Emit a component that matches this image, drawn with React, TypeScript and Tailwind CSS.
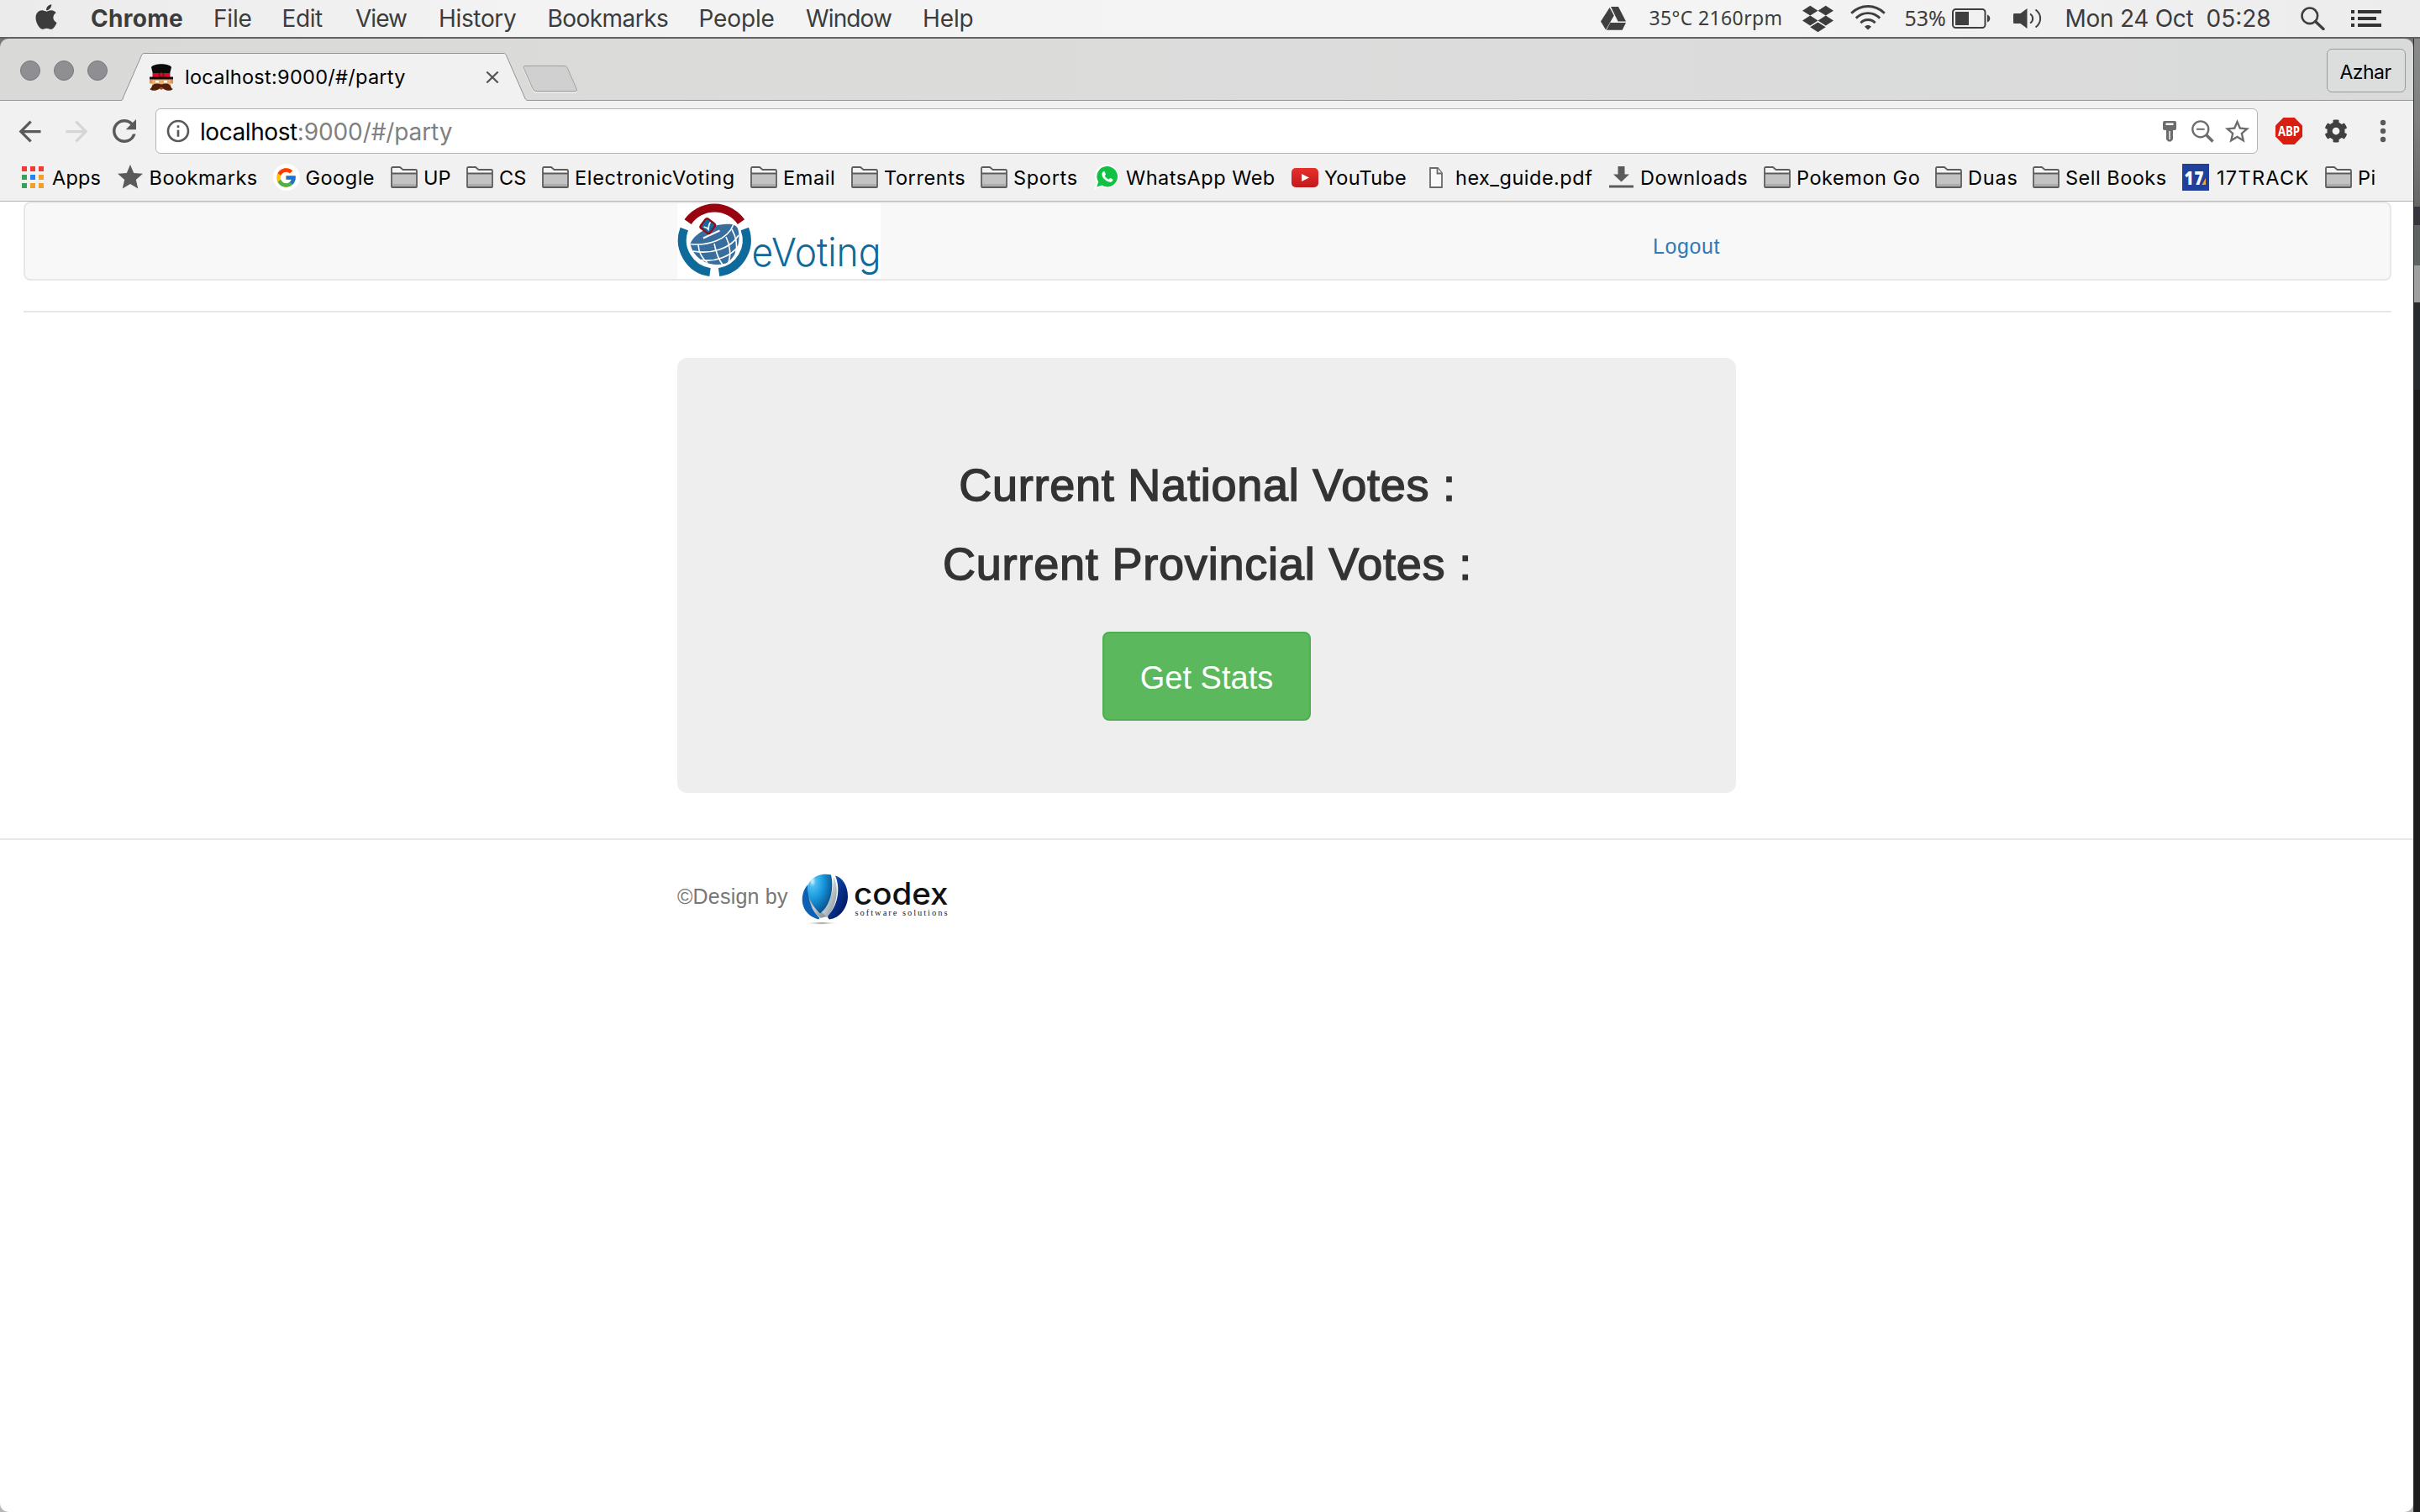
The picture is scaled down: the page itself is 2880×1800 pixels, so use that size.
import type { ReactNode } from "react";
import { FaApple, FaCog, FaDropbox } from "react-icons/fa";
import { FcGoogle } from "react-icons/fc";
import { MdArrowBack, MdArrowForward, MdInfoOutline, MdRefresh, MdStar, MdStarBorder } from "react-icons/md";

/* ---------- menu bar ---------- */

const menus = [
  { label: "Chrome", cls: "w-[146px] font-bold tracking-[0.28px]" },
  { label: "File", cls: "w-[81.5px] tracking-[-0.2px]" },
  { label: "Edit", cls: "w-[87.5px] tracking-[-0.42px]" },
  { label: "View", cls: "w-[99px] tracking-[-0.97px]" },
  { label: "History", cls: "w-[129.5px] tracking-[-0.34px]" },
  { label: "Bookmarks", cls: "w-[180px] tracking-[-0.55px]" },
  { label: "People", cls: "w-[127.5px] tracking-[-0.15px]" },
  { label: "Window", cls: "w-[139px] tracking-[-0.87px]" },
  { label: "Help", cls: "w-[64px] tracking-[-0.1px]" },
];

function DriveIcon() {
  return (
    <svg width="30" height="28" viewBox="0 0 30 28" fill="#3f3f3f">
      <path d="M10.6 1 15.8 10.4 6 27.6 0 17.4Z" />
      <path d="M12 0H21L30 17.4H20.6Z" />
      <path d="M11.3 18.9H30L25.6 27.8H6.9Z" />
    </svg>
  );
}

function WifiIcon() {
  return (
    <svg width="42" height="30" viewBox="0 0 42 30" fill="none" stroke="#3f3f3f" strokeWidth="2.9">
      <path d="M1.2 9.8C12.5-1.2 29.5-1.2 40.8 9.8" />
      <path d="M6.8 15.6C14.8 7.6 27.2 7.6 35.2 15.6" />
      <path d="M12.4 21.2C17.2 16.3 24.8 16.3 29.6 21.2" />
      <path d="M17 25.800C19.3 23.500 22.7 23.5 25 25.8L21 29.600Z" fill="#3f3f3f" stroke="none" />
    </svg>
  );
}

function BatteryIcon() {
  return (
    <svg width="46" height="24" viewBox="0 0 46 24">
      <rect x="1" y="1" width="38.500" height="22" rx="3.500" fill="none" stroke="#3f3f3f" strokeWidth="2" />
      <rect x="4" y="4" width="16" height="16" fill="#3f3f3f" />
      <path d="M42 7.500C46.4 8.500 46.400 15.5 42 16.5Z" fill="#3f3f3f" />
    </svg>
  );
}

function SpeakerIcon() {
  return (
    <svg width="34" height="24" viewBox="0 0 34 24" fill="none" stroke="#3f3f3f" strokeWidth="2">
      <path d="M0 7.500C0 6.500.5 6 1.500 6H8.500L16.500 0V24L8.500 18H1.500C.5 18 0 17.500 0 16.500Z" fill="#3f3f3f" stroke="none" />
      <path d="M20 6.500C24.2 9 24.2 15 20 17.500" />
      <path d="M26.500 1.500C34 7 34 17 26.500 22.500" />
    </svg>
  );
}

function MenuBar() {
  return (
    <header className="flex h-11 w-full items-center bg-[linear-gradient(90deg,#ebebeb_0%,#f3f3f3_22%,#f4f4f4_70%,#ececec_100%)] font-['Inter',sans-serif] text-[28px] leading-[44px] text-[#3c3c3c]">
      <div className="w-[108px] shrink-0 pl-[38px]">
        <FaApple size={34} className="-mt-1" />
      </div>
      {menus.map((m) => (
        <div key={m.label} className={"shrink-0 whitespace-nowrap " + m.cls}>{m.label}</div>
      ))}
      <div className="ml-auto flex h-11 shrink-0 items-center">
        <div className="w-[58px]"><DriveIcon /></div>
        <div className="-mt-0.5 w-[184.5px] whitespace-nowrap font-['Noto_Sans',sans-serif] text-[23px] tracking-[0.37px]">35°C 2160rpm</div>
        <div className="w-[55px]"><FaDropbox size={37} className="-ml-0.5" /></div>
        <div className="-mt-0.5 w-[64.5px]"><WifiIcon /></div>
        <div className="-mt-0.5 w-[56px] whitespace-nowrap font-['Noto_Sans',sans-serif] text-[25px]">53%</div>
        <div className="w-[73px]"><BatteryIcon /></div>
        <div className="w-[62px]"><SpeakerIcon /></div>
        <div className="w-[168px] whitespace-nowrap tracking-[-0.28px]">Mon 24 Oct</div>
        <div className="w-[112.500px] whitespace-nowrap">05:28</div>
        <div className="w-[60px]">
          <svg width="29" height="28" viewBox="0 0 29 28" fill="none" stroke="#3f3f3f">
            <circle cx="10.800" cy="10.800" r="9.300" strokeWidth="2.600" />
            <path d="M17.500 17.500 27 26.500" strokeWidth="3.400" strokeLinecap="round" />
          </svg>
        </div>
        <div className="w-[82px]">
          <svg width="37" height="20" viewBox="0 0 37 20" fill="#333">
            <path d="M0 0H4V4H0ZM8 0H36V4H8ZM0 8H4V12H0ZM8 8H30V12H8ZM0 16H4V20H0ZM8 16H36V20H8Z" />
          </svg>
        </div>
      </div>
    </header>
  );
}

/* ---------- tab strip ---------- */

function Favicon() {
  return (
    <svg width="28" height="32" viewBox="0 0 28 32">
      <path d="M3 18H25V27Q14 34 3 27Z" fill="#e9b06c" />
      <rect x="0" y="18.500" width="3" height="5" fill="#d9925a" />
      <rect x="25" y="18.500" width="3" height="5" fill="#d9925a" />
      <rect x="7" y="20" width="4" height="2.500" fill="#fff" />
      <rect x="17" y="20" width="4" height="2.500" fill="#fff" />
      <path d="M2 4C5-1 23-1 26 4L24 12H4Z" fill="#0a0a0a" />
      <path d="M3.500 11H24.500V16H3.500Z" fill="#d6062e" />
      <circle cx="14" cy="13" r="2.600" fill="#d6062e" stroke="#420" strokeWidth="1" />
      <path d="M0 15.500H28V18.500H0Z" fill="#1b0a0a" />
      <path d="M14 24.500C8 22 3 24 2.500 27.500C2 29 1 30 0 29.500C2 33 9 32.500 13 28.500H15C19 32.500 26 33 28 29.500C27 30 26 29 25.500 27.500C25 24 20 22 14 24.500Z" fill="#54200c" />
      <path d="M12 29H16L14 31Z" fill="#d6062e" />
    </svg>
  );
}

function TabStrip() {
  return (
    <div className="flex h-[74px] items-end rounded-t-[10px] border-b border-[#979797] bg-[linear-gradient(90deg,#d9d9d7_0%,#dbdbd9_30%,#dcdcdc_60%,#d9dada_100%)] font-['Inter',sans-serif]">
      <div className="flex w-36 shrink-0 gap-4 self-start pt-[26px] pl-6">
        <i className="h-6 w-6 rounded-full border border-[#77777b] bg-[#8f8f93]" />
        <i className="h-6 w-6 rounded-full border border-[#77777b] bg-[#8f8f93]" />
        <i className="h-6 w-6 rounded-full border border-[#77777b] bg-[#8f8f93]" />
      </div>
      <div className="relative -mb-px flex h-[57px] w-[484px] shrink-0 items-center pl-[34px]">
        <svg className="absolute top-0 left-0" width="484" height="57" viewBox="0 0 484 57">
          <path d="M0 56.500C2 56.500 2 55 3 52L24 4C25 1.500 25.500.5 28 .5H455C457.500.5 458 1.500 459 4L480 52C481 55 482 56.500 484 56.500V57H0Z" fill="#f1f1f1" />
          <path d="M0 56.500C2 56.500 2 55 3 52L24 4C25 1.500 25.500.5 28 .5H455C457.500.5 458 1.500 459 4L480 52C481 55 482 56.500 484 56.500" fill="none" stroke="#929292" />
        </svg>
        <span className="relative w-[42px]"><Favicon /></span>
        <span className="relative w-[358px] whitespace-nowrap text-[23.5px] leading-8 tracking-[0.29px] text-black">localhost:9000/#/party</span>
        <svg className="relative" width="16" height="14" viewBox="0 0 15 14" stroke="#555" strokeWidth="2.200"><path d="M.8.5 14.200 13.500M14.200.5.8 13.500" /></svg>
      </div>
      <svg className="-ml-1.5 mb-2 shrink-0" width="66" height="33" viewBox="0 0 66 33">
        <path d="M3 2.500H48C51 2.500 52.500 3 53.500 5.500L64 28.500C65 31 64.500 32.500 62 32.500H17C14.500 32.500 13 31.500 12 29.500L1.500 5.500C.8 3.500 1 2.500 3 2.500Z" fill="none" stroke="#eee" />
        <path d="M3 .5H48C51 .5 52.500 1 53.500 3.500L64 27.500C65 30 64.500 30.500 62 30.500H17C14.500 30.500 13 29.500 12 27.500L1.500 3.500C.8 1.500 1 .5 3 .5Z" fill="#d0d0d0" stroke="#a0a0a0" />
      </svg>
      <div className="mr-[9px] mb-[9px] ml-auto flex h-[52px] w-[94px] items-center justify-center self-end rounded-md border border-[#9b9b9b] bg-[#dcdddd] text-[23px] tracking-[-0.55px] text-black">
        <span className="pt-1 pr-0.5">Azhar</span>
      </div>
    </div>
  );
}

/* ---------- address bar ---------- */

function AddressBar() {
  return (
    <div className="flex h-[72px] items-center bg-[#f1f1f1] font-['Inter',sans-serif]">
      <div className="flex w-[185px] shrink-0 items-center pl-4 text-[#5a5a5a]">
        <MdArrowBack size={39} className="shrink-0" />
        <MdArrowForward size={39} className="ml-[17px] shrink-0 text-[#d5d5d5]" />
        <MdRefresh size={42} className="ml-4 shrink-0" />
      </div>
      <div className="flex h-[54px] w-[2502px] shrink-0 items-center rounded-md border border-[#b4b4b4] bg-white pl-2.5">
        <MdInfoOutline size={32} className="shrink-0 text-[#5a5a5a]" />
        <div className="ml-2.5 pt-px whitespace-nowrap text-[28px] leading-9 text-black">
          <span className="tracking-[-0.43px]">localhost</span>
          <span className="tracking-[-0.1px] text-[#808080]">:9000/#/party</span>
        </div>
        <div className="ml-auto flex items-center pr-1.5 text-[#6c6c6c]">
          <svg width="16" height="25" viewBox="0 0 16 25" fill="#6c6c6c">
            <path fillRule="evenodd" d="M2 0H14Q16 0 16 2V9Q16 11 14 11H2Q0 11 0 9V2Q0 0 2 0ZM3.500 2.500V5H12.500V2.500Z" />
            <path fillRule="evenodd" d="M4 11H12V22L9.500 24.500H6.500L4 22ZM7.300 12V22H8.700V12Z" />
          </svg>
          <svg className="ml-[18px]" width="27" height="27" viewBox="0 0 27 27" fill="none" stroke="#6c6c6c">
            <circle cx="10.800" cy="10.800" r="9.500" strokeWidth="2.300" />
            <path d="M6 10.800H15.600" strokeWidth="2" />
            <path d="M17.500 17.500 25.500 25.500" strokeWidth="3.600" />
          </svg>
          <MdStarBorder size={35} className="ml-2.5 shrink-0" />
        </div>
      </div>
      <svg className="ml-[21px] shrink-0" width="32" height="32" viewBox="0 0 32 32">
        <path d="M9.400 0H22.600L32 9.400V22.600L22.600 32H9.400L0 22.600V9.400Z" fill="#d81e10" />
        <text x="3" y="21.500" textLength="26" lengthAdjust="spacingAndGlyphs" fontFamily="Open Sans, sans-serif" fontWeight="700" fontSize="16" fill="#fff">ABP</text>
      </svg>
      <FaCog size={28} className="ml-[26px] shrink-0 text-[#3f3f3f]" />
      <svg className="ml-[38px] shrink-0" width="8" height="28" viewBox="0 0 8 28" fill="#5a5a5a">
        <circle cx="4" cy="4" r="3.200" /><circle cx="4" cy="14" r="3.200" /><circle cx="4" cy="24" r="3.200" />
      </svg>
    </div>
  );
}

/* ---------- bookmarks bar ---------- */

function Folder() {
  return (
    <svg width="32" height="26" viewBox="0 0 32 26">
      <path d="M1 24V2.500Q1 1 2.500 1H11L14.500 4H29.500Q31 4 31 5.500V24Q31 25 30 25H2Q1 25 1 24Z" fill="#f4f4f4" stroke="#5c5c5c" strokeWidth="1.800" />
      <rect x="2" y="9" width="28" height="12" fill="#c3c3c3" />
      <rect x="2" y="21" width="28" height="3" fill="#adadad" />
      <path d="M1 8.500H31" stroke="#5c5c5c" strokeWidth="2" />
    </svg>
  );
}

function AppsGrid() {
  const colors = ["#ef3d36", "#ef3d36", "#ef3d36", "#3ba15a", "#2383f5", "#f0a02a", "#3ba15a", "#f0a02a", "#f0a02a"];
  return (
    <div className="grid grid-cols-3 gap-1">
      {colors.map((c, i) => <i key={i} className="h-1.5 w-1.5" style={{ background: c }} />)}
    </div>
  );
}

function WhatsApp() {
  return (
    <svg width="30" height="30" viewBox="0 0 30 30">
      <path d="M15.500 0A14 14 0 1 1 9 26.500L0 29.500 3 21A14 14 0 0 1 15.500 0Z" fill="#fff" />
      <path d="M15.500 2A12.200 12.200 0 1 1 9.400 24.600L3.200 26.500 5.200 20.600A12.200 12.200 0 0 1 15.500 2Z" fill="#10c143" />
      <path d="M11 8.200C12 7.600 12.600 8 13 9L13.900 11.200C14.100 12 12.900 12.800 12.700 13.300C13.800 15.400 15.400 16.700 17.500 17.500C18.200 17.300 18.800 15.900 19.600 16.100L22 17.300C22.700 17.800 22.400 19.200 21.600 20C18.500 22.600 9.300 17.500 9.300 11.300C9.400 9.700 10.200 8.700 11 8.200Z" fill="#fff" />
    </svg>
  );
}

const bookmarks: { label: string; icon: ReactNode; cls: string }[] = [
  { label: "Apps", icon: <AppsGrid />, cls: "w-[115.5px] tracking-[0.2px]" },
  { label: "Bookmarks", icon: <MdStar size={36} className="-mx-0.5 shrink-0 text-[#5a5a5a]" />, cls: "w-[186px] tracking-[0.5px]" },
  {
    label: "Google",
    icon: <span className="flex h-8 w-8 items-center justify-center rounded-full bg-white"><FcGoogle size={27} /></span>,
    cls: "w-[140.500px] tracking-[0.5px]",
  },
  { label: "UP", icon: <Folder />, cls: "w-[90px] tracking-[0.1px]" },
  { label: "CS", icon: <Folder />, cls: "w-[90px] tracking-[0px]" },
  { label: "ElectronicVoting", icon: <Folder />, cls: "w-[248px] tracking-[0.7px]" },
  { label: "Email", icon: <Folder />, cls: "w-[120px] tracking-[0.6px]" },
  { label: "Torrents", icon: <Folder />, cls: "w-[154px] tracking-[0.6px]" },
  { label: "Sports", icon: <Folder />, cls: "w-[134px] tracking-[0.7px]" },
  { label: "WhatsApp Web", icon: <WhatsApp />, cls: "w-[236px] tracking-[0.5px]" },
  {
    label: "YouTube",
    icon: (
      <svg width="32" height="23" viewBox="0 0 32 23">
        <defs>
          <linearGradient id="yt" x1="0" y1="0" x2="0" y2="1"><stop offset="0" stopColor="#e6302c" /><stop offset="1" stopColor="#c2191d" /></linearGradient>
        </defs>
        <rect width="32" height="23" rx="5" fill="url(#yt)" />
        <path d="M12 7V16L21 11.500Z" fill="#fff" />
      </svg>
    ),
    cls: "w-[156px] tracking-[0.22px]",
  },
  {
    label: "hex_guide.pdf",
    icon: (
      <svg width="16" height="25" viewBox="0 0 16 25" fill="#fafafa" stroke="#6a6a6a" strokeWidth="1.800">
        <path d="M1 1H10L15 7V24H1Z" /><path d="M9.500 1V7.500H15" />
      </svg>
    ),
    cls: "w-[220px] tracking-[0.49px]",
  },
  {
    label: "Downloads",
    icon: (
      <svg width="29" height="26" viewBox="0 0 29 26" fill="#5a5a5a">
        <path d="M10.500 0H18.500V9.500H24L14.500 18.500 5 9.500H10.500Z" /><path d="M0 22.500H29V25.500H0Z" />
      </svg>
    ),
    cls: "w-[186px] tracking-[0.5px]",
  },
  { label: "Pokemon Go", icon: <Folder />, cls: "w-[204px] tracking-[0.55px]" },
  { label: "Duas", icon: <Folder />, cls: "w-[116px] tracking-[0.8px]" },
  { label: "Sell Books", icon: <Folder />, cls: "w-[178px] tracking-[0.5px]" },
  {
    label: "17TRACK",
    icon: (
      <svg width="32" height="32" viewBox="0 0 32 32">
        <rect width="32" height="32" fill="#21409a" />
        <path d="M28 17V25H23.500Z" fill="#f5a623" />
        <text x="2.500" y="24.500" textLength="24" lengthAdjust="spacingAndGlyphs" fontFamily="Open Sans, sans-serif" fontWeight="800" fontSize="22" fill="#fff">17</text>
      </svg>
    ),
    cls: "w-[170px] gap-[9px] tracking-[1.3px]",
  },
  { label: "Pi", icon: <Folder />, cls: "w-[70px] tracking-[0.6px]" },
];

function BookmarksBar() {
  return (
    <div className="flex h-12 items-center border-b border-[#b4b4b4] bg-[#f1f1f1] pb-[9px] pl-[23px] font-['Inter',sans-serif] text-[23.5px] leading-8 text-black">
      {bookmarks.map((b) => (
        <div key={b.label} className={"flex shrink-0 items-center gap-[7px] whitespace-nowrap " + b.cls}>
          <span className="flex h-8 w-8 shrink-0 items-center justify-center">{b.icon}</span>
          <span className="pt-0.5">{b.label}</span>
        </div>
      ))}
    </div>
  );
}

/* ---------- page ---------- */

function EVotingLogo() {
  return (
    <svg width="242" height="90" viewBox="0 0 242 90" className="block bg-white">
      <g fill="none" strokeWidth="10">
        <path d="M12.600 22.200A38.500 38.500 0 0 1 76 22.200" stroke="#980410" />
        <path d="M8.300 30.500A38.500 38.500 0 0 0 39 82.100" stroke="#0f6a9c" />
        <path d="M80.300 30.500A38.500 38.500 0 0 1 49.600 82.100" stroke="#0f6a9c" />
      </g>
      <path d="M15.500 48C20 37 36 27 55 25C64 24 70 25 72 30C77 46 69 66 58 71.500C50 74 38 73 32 69.500C22 64 17 56 15.500 48Z" fill="#386e9e" />
      <g fill="none" stroke="#fff" strokeWidth="1.600">
        <path d="M15.500 48.500C36 51 60 44 67 25" />
        <path d="M19 57C40 61 64 54 73 38" />
        <path d="M28 67.500C44 70 64 64 73.500 50" />
        <path d="M25 49.500C25.500 58 30 66 36 71" />
        <path d="M44 48C46 58 50 68 54 73" />
        <path d="M58 40C63 50 64 62 61 70" />
        <path d="M65 31C70 40 72 50 69.500 60" />
        <path d="M31 41.500 50.500 32.500" strokeWidth="2" />
      </g>
      <rect x="29.300" y="20" width="14" height="14" rx="2.500" transform="rotate(37 36.300 27)" fill="#156a9d" stroke="#980410" strokeWidth="2.200" />
      <path d="M31.500 28C34 28.500 36 29.500 37 31C37.500 28 37 25 39.500 22.500" fill="none" stroke="#fff" strokeWidth="1.700" />
      <text x="88.500" y="74.700" textLength="154" lengthAdjust="spacingAndGlyphs" fontFamily="Inter, sans-serif" fontWeight="300" fontSize="47" fill="#0f6a9c">eVoting</text>
    </svg>
  );
}

function CodexLogo() {
  return (
    <svg width="180" height="70" viewBox="0 0 180 70" className="block">
      <defs>
        <radialGradient id="orb" cx="0.2" cy="0.18" r="0.95">
          <stop offset="0" stopColor="#d8f4ff" /><stop offset="0.15" stopColor="#4dbdf0" /><stop offset="0.45" stopColor="#1b9be0" /><stop offset="1" stopColor="#04457e" />
        </radialGradient>
        <linearGradient id="navy" x1="0" y1="0" x2="1" y2="1"><stop offset="0" stopColor="#1a6dc0" /><stop offset="0.5" stopColor="#08308a" /><stop offset="1" stopColor="#020c4e" /></linearGradient>
        <linearGradient id="steel" x1="0" y1="0" x2="1" y2="1"><stop offset="0" stopColor="#5d6a70" /><stop offset="0.5" stopColor="#c6ced1" /><stop offset="1" stopColor="#7c878c" /></linearGradient>
        <radialGradient id="shade"><stop offset="0" stopColor="#777" /><stop offset="1" stopColor="#fff" stopOpacity="0" /></radialGradient>
      </defs>
      <ellipse cx="28" cy="65" rx="20" ry="2" fill="url(#shade)" />
      <path d="M44 8.500C52 10 59 20 59 33C59 46 50 59 37 60.500C34 58 35 56 37 54C48 42 50 22 44 8.500Z" fill="url(#navy)" />
      <path d="M42 10C48 22 48 42 34 58L25 55C38 42 42 26 42 10Z" fill="url(#steel)" />
      <path d="M10 25C10 40 18 54 27 59L33 57 26 50Z" fill="url(#steel)" />
      <path d="M11.500 19C1 30 1 54 24 60.500L25.500 59C16 50 11 38 11.500 19Z" fill="#0b62b4" />
      <path d="M39 7.500C26 4 11 12 11 24C12 38 20 48 26 53.500C38 44 43 24 39 7.500Z" fill="url(#orb)" />
      <text x="66" y="43.300" textLength="112.500" lengthAdjust="spacingAndGlyphs" fontFamily="Inter, sans-serif" fontWeight="500" fontSize="36.500" fill="#111">codex</text>
      <text x="67.500" y="56" textLength="110" fontFamily="Liberation Serif, serif" fontSize="10.500" fill="#222">software solutions</text>
    </svg>
  );
}

function Page() {
  return (
    <main className="flex grow flex-col rounded-b-[10px] bg-white font-['Liberation_Sans',sans-serif]">
      <nav className="mr-[26px] ml-7 flex h-[94px] items-center rounded-lg border-2 border-[#e7e7e7] bg-[#f8f8f8] pl-[776px]">
        <EVotingLogo />
        <a className="ml-[919px] pt-[11px] text-[25px] leading-8 tracking-[0.6px] text-[#337ab7]">Logout</a>
      </nav>
      <hr className="mt-9 mr-[26px] ml-7 border-t-2 border-[#e7e7e7]" />
      <section className="mt-[54px] ml-[806px] flex h-[518px] w-[1260px] flex-col items-center rounded-xl bg-[#eee] pt-[122px] text-[#333]">
        <h2 className="pl-0.5 text-[54px] leading-[59px] tracking-[0.76px] [-webkit-text-stroke:1.5px_#333]">Current National Votes :</h2>
        <h2 className="mt-[35px] pl-0.5 text-[54px] leading-[59px] tracking-[0.8px] [-webkit-text-stroke:1.5px_#333]">Current Provincial Votes :</h2>
        <button className="mt-[51px] h-[106px] w-[248px] rounded-lg border-2 border-[#4cae4c] bg-[#5cb85c] pt-[5px] text-[38px] text-white">Get Stats</button>
      </section>
      <footer className="mt-[54px] flex items-start border-t-2 border-[#e7e7e7] pl-[806px] text-[#777]">
        <p className="mt-[51px] w-36 whitespace-nowrap text-[25px] leading-8 tracking-[0.2px]">©Design by</p>
        <div className="mt-[34px]"><CodexLogo /></div>
      </footer>
    </main>
  );
}

export default function App() {
  return (
    <div className="flex h-[1800px] w-[2880px] flex-col overflow-hidden bg-[#b5b5b5]">
      <MenuBar />
      <div className="h-0.5 w-full shrink-0 bg-[#606163]" />
      <div className="flex grow">
        <div className="flex w-[2872px] shrink-0 flex-col bg-[linear-gradient(180deg,#777_0,#777_40px,#b5b5b5_200px)]">
          <TabStrip />
          <AddressBar />
          <BookmarksBar />
          <Page />
        </div>
        <aside className="flex w-2 flex-col border-l border-[#2a2a2c]">
          <div className="h-[200px] bg-[linear-gradient(180deg,#8a8a8a,#7d7f80_50%,#666_100%)]" />
          <div className="h-[22px] bg-[#35343c]" />
          <div className="h-12 bg-[#5e6263]" />
          <div className="h-11 bg-[#a0a0a0]" />
          <div className="h-[104px] bg-[#282b2d]" />
          <div className="grow bg-[#1c1c1c]" />
        </aside>
      </div>
    </div>
  );
}
